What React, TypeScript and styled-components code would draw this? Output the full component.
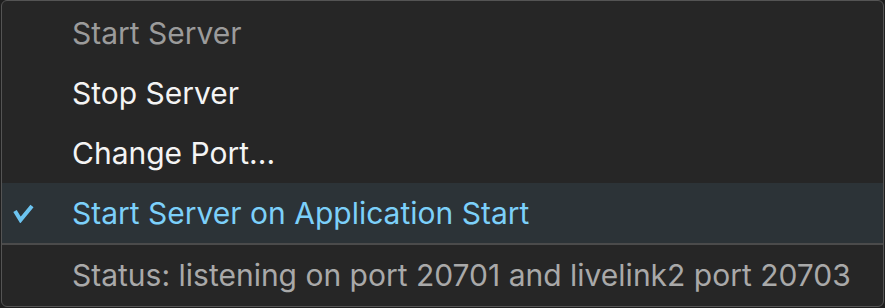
import styled, { createGlobalStyle } from 'styled-components';

const GlobalStyle = createGlobalStyle`
  html, body {
    margin: 0;
    padding: 0;
    background: #1f1f1f;
  }
  body {
    font-family: Inter, 'Noto Sans', sans-serif;
  }
`;

type ItemTone = 'disabled' | 'normal' | 'checked' | 'status';

const items: { label: string; tone: ItemTone }[] = [
  { label: 'Start Server', tone: 'disabled' },
  { label: 'Stop Server', tone: 'normal' },
  { label: 'Change Port...', tone: 'normal' },
  { label: 'Start Server on Application Start', tone: 'checked' },
];

const toneColor: Record<ItemTone, string> = {
  disabled: '#9b9b9b',
  normal: '#f4f4f4',
  checked: '#7cd0fa',
  status: '#a9a9a9',
};

const CheckIcon = () => (
  <svg width='21' height='19' viewBox='0 0 21 19'>
    <path d='M2 7 L7.5 16 L19 2' fill='none' stroke='#6cc4f0' strokeWidth='4' strokeLinecap='butt' strokeLinejoin='miter' />
  </svg>
);

const App = () => {
  return (
    <>
      <GlobalStyle />
      <Menu>
        {items.map((item) => (
          <MenuItem key={item.label} tone={item.tone} $active={item.tone === 'checked'}>
            <Gutter>{item.tone === 'checked' && <CheckIcon />}</Gutter>
            <Label>{item.label}</Label>
          </MenuItem>
        ))}
        <Separator />
        <MenuItem tone='status'>
          <Gutter />
          <Label>Status: listening on port 20701 and livelink2 port 20703</Label>
        </MenuItem>
      </Menu>
    </>
  );
};

const Menu = styled.div`
  box-sizing: border-box;
  width: 883px;
  height: 307px;
  margin-left: 1px;
  padding-top: 2px;
  background: #262626;
  border: 1px solid #545454;
  border-radius: 6px;
  display: flex;
  flex-direction: column;
  overflow: hidden;
`;

const MenuItem = styled.div<{ tone: ItemTone; $active?: boolean }>`
  display: flex;
  align-items: center;
  height: 60px;
  flex-shrink: 0;
  color: ${(p) => toneColor[p.tone]};
  background: ${(p) => (p.$active ? '#2c3337' : 'transparent')};
`;

const Gutter = styled.div`
  width: 70px;
  flex-shrink: 0;
  display: flex;
  align-items: center;
  padding-left: 11px;
  box-sizing: border-box;
`;

const Label = styled.span`
  font-size: 30px;
  line-height: 36px;
  white-space: nowrap;
`;

const Separator = styled.div`
  height: 2px;
  background: #4b4b4b;
  flex-shrink: 0;
`;

export default App;
